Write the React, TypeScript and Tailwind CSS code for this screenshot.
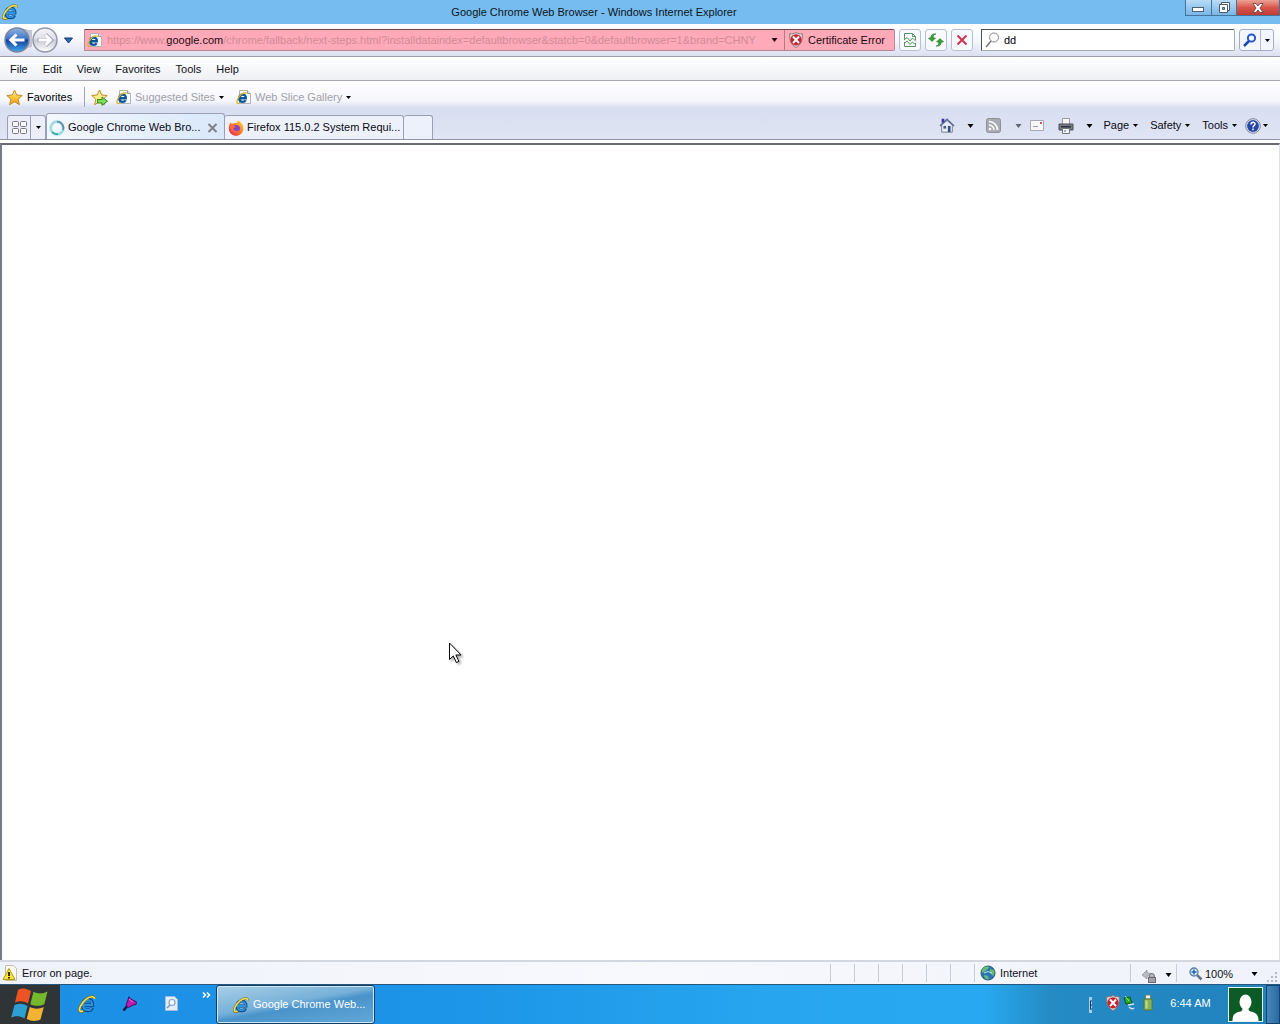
import React from "react";

function Caret({ className = "text-black" }: { className?: string }) {
  return (
    <svg width="7" height="4" viewBox="0 0 7 4" className={"shrink-0 " + className} aria-hidden="true">
      <path d="M0.5 0h6L3.5 4z" fill="currentColor" />
    </svg>
  );
}

function SmallCaret() {
  return (
    <svg width="5" height="3" viewBox="0 0 5 3" className="shrink-0 text-black" aria-hidden="true">
      <path d="M0 0h5L2.5 3z" fill="currentColor" />
    </svg>
  );
}

function IeLogo({ size = 16 }: { size?: number }) {
  return (
    <svg width={size} height={size} viewBox="0 0 16 16" className="shrink-0" aria-hidden="true">
      <path d="M4.500 9h8.300c.1-3-1.500-5-4-5-2.600 0-4.600 2.200-4.600 5 0 2.900 1.800 4.700 4.500 4.700 1.900 0 3.200-.9 3.800-2.500" fill="none" stroke="#0b4584" strokeWidth="3.200" />
      <path d="M4.700 9h7.900c0-2.800-1.500-4.600-3.800-4.600-2.400 0-4.200 2-4.200 4.600 0 2.600 1.700 4.300 4.100 4.300 1.700 0 2.800-.8 3.400-2" fill="none" stroke="#2f93dc" strokeWidth="1.900" />
      <path d="M15 3.600C15 .6 10.500.5 6.500 4.200 2.500 7.800-.2 13 1.700 14.600c.8.700 2 .4 3.200-.2" fill="none" stroke="#7a6a10" strokeWidth="2.200" />
      <path d="M14.900 3.400C14.500.8 10.500.8 6.500 4.300 2.700 7.800.2 12.800 1.800 14.300c.7.600 1.800.3 2.800-.1" fill="none" stroke="#f6de5a" strokeWidth="1.500" />
    </svg>
  );
}

function IePage() {
  return (
    <svg width="16" height="16" viewBox="0 0 16 16" className="shrink-0" aria-hidden="true">
      <path d="M3.500 1.500h8l3 3v10h-11z" fill="#fdfdfd" stroke="#b4b4b8" />
      <path d="M11.500 1.500v3h3" fill="#e4e4e4" stroke="#9a9a9a" />
      <path d="M3 9.300h6.800c.1-2.400-1.100-3.700-3.200-3.700s-3.400 1.400-3.400 3.700 1.400 3.600 3.500 3.600c1.400 0 2.400-.6 2.900-1.700" fill="none" stroke="#0e5799" strokeWidth="2.400" />
      <path d="M10.800 4.600C9.500 3 6 4 3.500 7.200 1.300 10 .3 13.500 1.500 14.300c.6.400 1.300.2 2-.1" fill="none" stroke="#d8b32a" strokeWidth="1.300" />
    </svg>
  );
}

function Star({ arrow = false }: { arrow?: boolean }) {
  return (
    <svg width="17" height="17" viewBox="0 0 17 17" className="shrink-0" aria-hidden="true">
      <defs>
        <linearGradient id="starFill" x1="0" y1="0" x2="0" y2="1">
          <stop offset="0" stopColor="#fff3a0" />
          <stop offset="0.500" stopColor="#fdc83a" />
          <stop offset="1" stopColor="#f39a1c" />
        </linearGradient>
      </defs>
      <path d="M8.500 1l2.200 5 5.500.5-4.100 3.700 1.300 5.500-4.900-2.900-4.900 2.900 1.300-5.500L.8 6.500 6.300 6z" fill={arrow ? "#fdf08a" : "url(#starFill)"} stroke="#c08a2c" strokeWidth="1" strokeLinejoin="round" />
      {arrow && <path d="M6.500 10.500H11V8l5.500 4.200-5.500 4.300V14H6.500z" fill="#7fdc52" stroke="#2f8a24" />}
    </svg>
  );
}

function Shield() {
  return (
    <svg width="16" height="16" viewBox="0 0 16 16" className="shrink-0" aria-hidden="true">
      <path d="M8 .6c2 1 4 1.300 6.300 1.300C14.700 8 13 13 8 15.500 3 13 1.300 8 1.700 1.900 4 1.900 6 1.600 8 .6z" fill="#ddd" stroke="#8d7777" />
      <circle cx="8" cy="7.800" r="5.600" fill="#c9232d" />
      <path d="M5 4.500l6 6.600M11 4.500l-6 6.600" stroke="#fff" strokeWidth="2" />
    </svg>
  );
}

function NavButtons() {
  return (
    <div className="flex shrink-0 -space-x-px">
      <button aria-label="Back" className="block">
        <svg width="28" height="26" viewBox="0 0 28 26" aria-hidden="true">
          <defs>
            <linearGradient id="backFill" x1="0" y1="0" x2="0" y2="1">
              <stop offset="0" stopColor="#90b7e6" />
              <stop offset="0.450" stopColor="#3d74c4" />
              <stop offset="0.500" stopColor="#123f9b" />
              <stop offset="1" stopColor="#3fa8ee" />
            </linearGradient>
          </defs>
          <path d="M13 1c6 0 9 2 15 2V20c-4 0-7 4-15 5z" fill="#c3c6d0" />
          <circle cx="13" cy="13" r="12" fill="url(#backFill)" stroke="#7c86a0" strokeWidth="1.500" />
          <path d="M20.500 13H7.500M12.500 7.500L6.800 13l5.700 5.500" fill="none" stroke="#fff" strokeWidth="3" />
        </svg>
      </button>
      <button aria-label="Forward" className="block">
        <svg width="27" height="26" viewBox="0 0 27 26" aria-hidden="true">
          <defs>
            <linearGradient id="fwdFill" x1="0" y1="0" x2="0" y2="1">
              <stop offset="0" stopColor="#f4f5f9" />
              <stop offset="0.450" stopColor="#dfe1ea" />
              <stop offset="0.500" stopColor="#c6cad6" />
              <stop offset="1" stopColor="#ffffff" />
            </linearGradient>
          </defs>
          <circle cx="14" cy="13" r="12" fill="url(#fwdFill)" stroke="#9297a8" strokeWidth="1.500" />
          <path d="M6.500 13h13M14.500 7.500l5.700 5.500-5.700 5.500" fill="none" stroke="#a3a8b8" strokeWidth="4" />
          <path d="M7.500 13h12M14.500 8l5 5-5 5" fill="none" stroke="#fff" strokeWidth="2.800" />
        </svg>
      </button>
    </div>
  );
}

function TitleBar() {
  return (
    <header className="relative flex h-6 shrink-0 items-start justify-between bg-[#76bcf0]">
      <div className="pt-1 pl-0.5">
        <IeLogo />
      </div>
      <h1 className="absolute inset-x-0 top-0 pr-[92px] text-center text-[11px] leading-6 text-[#0c1420]">
        Google Chrome Web Browser - Windows Internet Explorer
      </h1>
      <div className="relative flex h-4 border border-t-0 border-[#44739b]">
        <button aria-label="Minimize" className="flex w-[26px] items-center justify-center border-r border-[#44739b] bg-gradient-to-b from-[#b9dcf6] to-[#78b6e5] pt-1">
          <svg width="13" height="7" viewBox="0 0 13 7" aria-hidden="true">
            <rect x="0.500" y="1.500" width="11" height="4" fill="#fff" stroke="#4b6175" />
          </svg>
        </button>
        <button aria-label="Restore" className="flex w-[25px] items-center justify-center border-r border-[#44739b] bg-gradient-to-b from-[#b9dcf6] to-[#78b6e5]">
          <svg width="13" height="13" viewBox="0 0 13 13" aria-hidden="true">
            <path d="M3.500 1.500h8v8h-8z" fill="#fff" stroke="#4b5a6b" />
            <path d="M1.500 3.500h8v8h-8z" fill="#fff" stroke="#4b5a6b" />
            <path d="M4.500 6.500h2v2h-2z" fill="#90bde2" stroke="#4b5a6b" />
          </svg>
        </button>
        <button aria-label="Close" className="flex w-[42px] items-center justify-center bg-gradient-to-b from-[#eba196] via-[#d8544c] to-[#c03a34]">
          <svg width="12" height="10" viewBox="0 0 12 10" aria-hidden="true">
            <path d="M1 .5h3l2 2.500L8 .5h3L8 5l3 4.500H8L6 7 4 9.500H1L4 5z" fill="#fff" stroke="#5e3a3a" strokeWidth="0.800" />
          </svg>
        </button>
      </div>
    </header>
  );
}

function ToolButton({ label, children }: { label: string; children: React.ReactNode }) {
  return (
    <button aria-label={label} className="flex h-[22px] w-[22px] shrink-0 items-center justify-center rounded-[3px] border border-[#b4bfd2] bg-[#f8faff]">
      {children}
    </button>
  );
}

function AddressRow() {
  return (
    <div className="flex h-[33px] shrink-0 items-center border-b border-[#9a9bae] bg-gradient-to-b from-white via-[#f7f8fd] to-[#dcdff0] pr-1.5 pl-1">
      <NavButtons />
      <button aria-label="Recent pages" className="flex w-5 shrink-0 justify-center">
        <svg width="9" height="7" viewBox="0 0 9 7" aria-hidden="true">
          <path d="M.5 1h8l-4 5z" fill="#2b6db0" stroke="#173a6b" />
        </svg>
      </button>
      <div className="ml-1.5 flex h-[22px] min-w-0 flex-1 items-center rounded-r-[2px] border border-[#b08896] border-t-[#70434c] bg-[#ffa9b9] pl-0.5">
        <IePage />
        <div className="ml-1 min-w-0 flex-1 overflow-hidden whitespace-nowrap text-[11px] text-[#cf8c98]">
          https://www.<span className="text-[#1c0a10]">google.com</span>/chrome/fallback/next-steps.html?installdataindex=defaultbrowser&amp;statcb=0&amp;defaultbrowser=1&amp;brand=CHNY
        </div>
        <button aria-label="Show address list" className="flex w-[22px] shrink-0 justify-center self-stretch border-r border-[#bd7483] pl-0.5 pt-2">
          <Caret className="text-[#22060c]" />
        </button>
        <button className="flex w-[109px] shrink-0 items-center gap-1 pl-[3px] text-[11px] whitespace-nowrap text-[#1c0a10]">
          <Shield />
          Certificate Error
        </button>
      </div>
      <div className="ml-1 flex shrink-0 gap-1">
        <ToolButton label="Compatibility view">
          <svg width="14" height="16" viewBox="0 0 14 16" aria-hidden="true">
            <path d="M1.500 7V1.500h8l3 3V8M9.500 1.500v3h3M1.500 10v4.500h11V11" fill="none" stroke="#5d8f63" />
            <path d="M1 8l3-2.500L7 9l2.500-3L13 9.500M1 11.500L4 9l3 3.500L9.500 10l3.500 3" fill="none" stroke="#4d9a58" />
          </svg>
        </ToolButton>
        <ToolButton label="Refresh">
          <svg width="16" height="14" viewBox="0 0 16 14" aria-hidden="true">
            <path d="M8 1C5.500 1 5.200 2.500 5.200 5H7.500L4 8.500.5 5h2.300c0-3 1.500-4.500 5.200-4z" fill="#37a52f" stroke="#1d6d1c" strokeWidth="0.600" />
            <path d="M8 13c2.500 0 2.800-1.500 2.800-4H8.500L12 5.500 15.500 9h-2.300c0 3-1.500 4.500-5.200 4z" fill="#37a52f" stroke="#1d6d1c" strokeWidth="0.600" />
          </svg>
        </ToolButton>
        <ToolButton label="Stop">
          <svg width="12" height="12" viewBox="0 0 12 12" aria-hidden="true">
            <path d="M1.500 1.500l9 9M10.500 1.500l-9 9" stroke="#d0334c" strokeWidth="2" />
          </svg>
        </ToolButton>
      </div>
      <label className="ml-2 flex h-[22px] w-[20%] shrink-0 items-center rounded-r-[2px] border border-[#a3acb8] border-t-[#4b544c] border-l-[#4b544c] bg-white pl-[3px]">
        <svg width="16" height="16" viewBox="0 0 16 16" className="shrink-0" aria-hidden="true">
          <circle cx="9" cy="5.500" r="4.500" fill="#fbfbfb" stroke="#8a8a8a" />
          <path d="M6 9l-5 6" stroke="#777" strokeWidth="1.500" />
        </svg>
        <input aria-label="Search" defaultValue="dd" className="ml-[3px] min-w-0 flex-1 bg-transparent text-[11px] text-black outline-none" />
      </label>
      <div className="ml-1 flex h-[22px] shrink-0 rounded-[3px] border border-[#a4adc6] bg-[#f3f6ff]">
        <button aria-label="Go" className="flex w-[21px] items-center justify-center border-r border-[#b4bccd]">
          <svg width="14" height="14" viewBox="0 0 14 14" aria-hidden="true">
            <circle cx="8.500" cy="5" r="3.600" fill="#fff" stroke="#2459cf" strokeWidth="2" />
            <path d="M6 8l-5 5" stroke="#1a45a9" strokeWidth="2.500" />
          </svg>
        </button>
        <button aria-label="Search options" className="flex w-3 items-center justify-center">
          <SmallCaret />
        </button>
      </div>
    </div>
  );
}

function MenuRow() {
  return (
    <nav className="flex h-6 shrink-0 items-center gap-[15px] border-b border-[#a5a6b0] bg-gradient-to-b from-white to-[#eef0f5] pt-px pl-2.5 text-[11px] text-[#101018]">
      {["File", "Edit", "View", "Favorites", "Tools", "Help"].map((m) => (
        <button key={m}>{m}</button>
      ))}
    </nav>
  );
}

function FavoritesRow() {
  return (
    <div className="flex h-[34px] shrink-0 items-center pb-0.5 pl-1.5 text-[11px] whitespace-nowrap">
      <button className="flex w-[78px] items-center gap-1 text-black">
        <Star />
        Favorites
      </button>
      <div className="mr-1.5 h-5 border-l border-[#a2a4b4]" />
      <button aria-label="Add to Favorites Bar">
        <Star arrow />
      </button>
      <button className="ml-2 flex w-[120px] items-center text-[#a0a0a8]">
        <IePage />
        <span className="mr-1 ml-[3px]">Suggested Sites</span>
        <SmallCaret />
      </button>
      <button className="flex items-center text-[#a0a0a8]">
        <IePage />
        <span className="mr-1 ml-[3px]">Web Slice Gallery</span>
        <SmallCaret />
      </button>
    </div>
  );
}

function Tabs() {
  return (
    <div className="flex h-6 items-stretch pl-[7px] text-[11px] text-[#0a0a14]">
      <div className="flex rounded-t-[3px] border border-b-0 border-[#9a9fb5] bg-[#eceffa]">
        <button aria-label="Quick tabs" className="flex w-[23px] items-center justify-center border-r border-[#9a9fb5]">
          <svg width="15" height="13" viewBox="0 0 15 13" fill="#f8f8fc" stroke="#77777f" aria-hidden="true">
            <rect x="0.500" y="0.500" width="6" height="5" rx="1" />
            <rect x="8.500" y="0.500" width="6" height="5" rx="1" />
            <rect x="0.500" y="7.500" width="6" height="5" rx="1" />
            <rect x="8.500" y="7.500" width="6" height="5" rx="1" />
          </svg>
        </button>
        <button aria-label="Tab list" className="flex w-3.5 items-center justify-center">
          <SmallCaret />
        </button>
      </div>
      <div className="-mt-0.5 flex w-[179px] items-center rounded-t-[3px] border border-b-0 border-[#9a9fb5] bg-gradient-to-r from-[#f4f8ff] to-[#d9e8fb] pt-0.5 pr-1.5 pl-0.5">
        <svg width="16" height="16" viewBox="0 0 16 16" className="shrink-0" fill="none" aria-hidden="true">
          <circle cx="8" cy="8" r="6.300" stroke="#a3dbe4" strokeWidth="2.800" />
          <path d="M8 1.700A6.300 6.300 0 0 1 14 10" stroke="#5c8fa9" strokeWidth="1.800" />
          <path d="M3 12a6.300 6.300 0 0 0 6 2" stroke="#2fa9a0" strokeWidth="1.800" />
        </svg>
        <button className="ml-[3px] flex-1 text-left whitespace-nowrap">Google Chrome Web Bro...</button>
        <button aria-label="Close tab">
          <svg width="11" height="10" viewBox="0 0 11 10" aria-hidden="true">
            <path d="M1.500 1l8 8M9.500 1l-8 8" stroke="#808088" strokeWidth="2" />
          </svg>
        </button>
      </div>
      <button className="flex w-[179px] items-center rounded-t-[3px] border border-b-0 border-l-0 border-[#9a9fb5] bg-[#edf1fc] pl-[3px] whitespace-nowrap">
        <svg width="16" height="16" viewBox="0 0 16 16" className="mr-[3px] shrink-0" aria-hidden="true">
          <defs>
            <linearGradient id="fox" x1="1" y1="0" x2="0" y2="1">
              <stop offset="0" stopColor="#ffe23f" />
              <stop offset="0.400" stopColor="#ff8b23" />
              <stop offset="1" stopColor="#e3175c" />
            </linearGradient>
          </defs>
          <path d="M10 .5c3 1.500 5.500 4.500 5.500 8A7.400 7.400 0 0 1 .7 8.500c0-2.500.8-4.500 1.800-6L4 4c1-1 2.500-1 4-1 1-.5 2-1.200 2-2.500z" fill="url(#fox)" />
          <circle cx="8.300" cy="8.500" r="3.600" fill="#8544c9" />
          <path d="M2 6.500c2-1 4-.6 6 .5-1.500.2-2 1.500-3.200 1.500 1 2.500 4 3.500 6.500 1.500-1 3-7.500 4-9.300-3.500z" fill="#ff7139" />
        </svg>
        Firefox 115.0.2 System Requi...
      </button>
      <button aria-label="New tab" className="w-[29px] rounded-t-[3px] border border-b-0 border-l-0 border-[#9a9fb5] bg-[#edf1fc]" />
    </div>
  );
}

function TextCommand({ label }: { label: string }) {
  return (
    <button className="flex items-center gap-1">
      {label}
      <SmallCaret />
    </button>
  );
}

function CommandBar() {
  return (
    <div className="flex items-center pr-3 pb-[3px] text-[11px] whitespace-nowrap text-[#0a0a14]">
      <button aria-label="Home">
        <svg width="16" height="17" viewBox="0 0 18 17" aria-hidden="true">
          <path d="M3 8v8h12V8L9 3z" fill="#e8edf6" stroke="#6d7890" />
          <path d="M1 9l8-7.500L17 9" fill="none" stroke="#5b6c93" strokeWidth="1.500" />
          <path d="M3 1h3v3L3 6z" fill="#3f32a5" />
          <path d="M10 9h3v7h-3z" fill="#39507a" />
          <path d="M5 9h3v3H5z" fill="#4a5a78" />
        </svg>
      </button>
      <button aria-label="Home options" className="ml-3"><Caret /></button>
      <button aria-label="Feeds" className="ml-3">
        <svg width="15" height="15" viewBox="0 0 15 15" fill="none" aria-hidden="true">
          <rect x="0.500" y="0.500" width="14" height="14" rx="2" fill="#a9acb4" stroke="#8e9199" />
          <path d="M3 7a5 5 0 0 1 5 5M3 3.500A8.500 8.500 0 0 1 11.500 12" stroke="#fff" strokeWidth="1.600" />
          <circle cx="4" cy="11" r="1.300" fill="#fff" />
        </svg>
      </button>
      <button aria-label="Feed options" className="ml-3.5"><Caret className="text-[#62646e]" /></button>
      <button aria-label="Read mail" className="ml-2">
        <svg width="15" height="12" viewBox="0 0 15 12" aria-hidden="true">
          <path d="M.5.5h13v10H.5z" fill="#f7f7fa" stroke="#a7a9b3" />
          <path d="M3 6.500h5" stroke="#9a9ca5" />
          <path d="M10 2h2v2h-2z" fill="#c55a66" />
        </svg>
      </button>
      <button aria-label="Print" className="ml-[13px]">
        <svg width="16" height="16" viewBox="0 0 16 16" aria-hidden="true">
          <path d="M4.500.5h7v6h-7z" fill="#f7f7f7" stroke="#9a9a9a" />
          <path d="M1 6h14v6H1z" fill="#777c84" stroke="#4b4f58" />
          <path d="M3 8h10v1.500H3z" fill="#2f3238" />
          <path d="M4.500 10.500h7v5h-7z" fill="#f2f2f2" stroke="#777" />
          <path d="M6 13h2" stroke="#3d6fb4" />
        </svg>
      </button>
      <button aria-label="Print options" className="ml-3"><Caret /></button>
      <div className="ml-2.5 flex items-center gap-3">
        <TextCommand label="Page" />
        <TextCommand label="Safety" />
        <TextCommand label="Tools" />
      </div>
      <button aria-label="Help" className="ml-2 flex items-center gap-0.5">
        <svg width="16" height="16" viewBox="0 0 16 16" aria-hidden="true">
          <circle cx="8" cy="8" r="7.300" fill="#dfe3ee" stroke="#7d869c" />
          <circle cx="8" cy="8" r="5.900" fill="#2747a8" />
          <path d="M6 6.500c0-3 4-2.700 4-.5C10 7.500 8 7.500 8 9.500M8 10.500v1.800" fill="none" stroke="#fff" strokeWidth="1.500" />
        </svg>
        <SmallCaret />
      </button>
    </div>
  );
}

function StatusBar() {
  return (
    <div className="flex h-6 shrink-0 items-center border-t-2 border-[#d3d7df] bg-gradient-to-r from-[#f0f2fb] via-[#f7f9fd] to-[#eff2fa] pl-0.5 text-[11px] text-[#101018]">
      <svg width="16" height="16" viewBox="0 0 16 16" className="shrink-0" aria-hidden="true">
        <path d="M3.500.5h8l3 3v12h-11z" fill="#fbfaf0" stroke="#c4c0ac" />
        <path d="M7 3.500L1 14.500h12z" fill="#fbe233" stroke="#b59a14" strokeLinejoin="round" />
        <path d="M7 7v4M7 12v1.500" stroke="#1b1b1b" strokeWidth="1.800" />
      </svg>
      <span className="ml-1 flex-1 whitespace-nowrap">Error on page.</span>
      <div className="flex h-[18px] shrink-0">
        {[0, 1, 2, 3, 4, 5].map((i) => (
          <div key={i} className="w-6 border-l border-[#c9ccd6]" />
        ))}
      </div>
      <div className="flex h-[18px] w-[156px] shrink-0 items-center gap-1 border-l border-[#c9ccd6] pl-[5px]">
        <svg width="16" height="16" viewBox="0 0 16 16" aria-hidden="true">
          <circle cx="8" cy="8" r="7" fill="#2a75b8" stroke="#245679" />
          <path d="M2 5c2-4 5-3.500 7-3.500C9 4 7 4 6 6L2 8zM10 4l4 1c1 3 0 5-1 6l-3-3zM4 10l4 1 1 3.500c-3 0-5-1.500-5-4.500z" fill="#6cba70" />
          <path d="M4 8q4-3 8 0" fill="none" stroke="#bfe5f2" />
        </svg>
        Internet
      </div>
      <button aria-label="Security options" className="flex h-[18px] w-[47px] shrink-0 items-center justify-between border-x border-[#c9ccd6] pt-1 pr-1 pl-2.5">
        <svg width="16" height="15" viewBox="0 0 16 15" aria-hidden="true">
          <path d="M1 7l5-5v3c5 0 7 1 7 4H9C9 8 8 8 6 8v3z" fill="#b9bcc3" stroke="#94979f" strokeWidth="0.800" />
          <path d="M8.500 9.500V8a2.500 2.500 0 0 1 5 0v1.500" fill="none" stroke="#777" />
          <rect x="7.500" y="9.500" width="7" height="5" fill="#a0a0a6" stroke="#6c6c74" />
        </svg>
        <Caret />
      </button>
      <button className="flex h-[18px] shrink-0 items-center pt-0.5 pl-3">
        <svg width="14" height="14" viewBox="0 0 14 14" aria-hidden="true">
          <circle cx="5" cy="5" r="4" fill="#d8eaf8" stroke="#5d7f9f" strokeWidth="1.300" />
          <path d="M8 8l4.500 4.500" stroke="#6b7486" strokeWidth="2.500" />
          <path d="M5 2.500v5M2.500 5h5" stroke="#1f66b4" strokeWidth="1.500" />
        </svg>
        <span className="ml-0.5 w-[46px] text-left">100%</span>
        <Caret />
      </button>
      <svg width="13" height="13" viewBox="0 0 13 13" className="ml-2 mr-px shrink-0 self-end" fill="#b4b8c2" aria-hidden="true">
        <path d="M9 1h2v2H9zM5 5h2v2H5zM9 5h2v2H9zM1 9h2v2H1zM5 9h2v2H5zM9 9h2v2H9z" />
      </svg>
    </div>
  );
}

function TaskBar() {
  return (
    <footer className="flex h-10 shrink-0 items-stretch border-t border-[#28577d] bg-[linear-gradient(90deg,#1c8fe3_0%,#1c94e8_35%,#27a6ef_60%,#27a8f0_77%,#258bc4_82%,#2182bd_100%)] text-[11px] text-white">
      <button aria-label="Start" className="flex w-[60px] shrink-0 items-center justify-center bg-[#2f3436]">
        <svg width="42" height="34" viewBox="0 0 42 34" aria-hidden="true">
          <path d="M9 2c5-2.500 8-1.500 13 1l-3 12.500c-4.500-2.500-8-3-13-1z" fill="#ec5523" />
          <path d="M24.500 3.800c5 2.200 9 2.200 14-.3l-3.200 12.700c-5 2-9 2-14 0z" fill="#75b82b" />
          <path d="M5.500 17c5-2 8.500-1.500 13 1l-3 12.500c-4.500-2.500-8-3-13.300-1z" fill="#2d9fd0" />
          <path d="M20.800 19c5 2.200 9 2.200 14 0l-3.300 12.500c-5 2.200-9 1.800-13.800-.5z" fill="#f4b232" />
        </svg>
      </button>
      <div className="flex items-center pl-[18px] pb-0.5">
        <button aria-label="Internet Explorer"><IeLogo size={18} /></button>
        <button aria-label="Paint tool" className="ml-[26px]">
          <svg width="16" height="16" viewBox="0 0 16 16" aria-hidden="true">
            <path d="M1.500 14.500l5-6" stroke="#1b1446" strokeWidth="2.500" />
            <path d="M7 .8l1.500 2L14.500 6l-.5 2.500-3 .5-4.500 2.500L4 9.500z" fill="#bd1cb3" stroke="#4b0b62" />
            <path d="M7 3l4 3" stroke="#ed6be2" />
          </svg>
        </button>
        <button aria-label="Search document" className="ml-[26px]">
          <svg width="15" height="17" viewBox="0 0 15 17" aria-hidden="true">
            <path d="M1.500 1.500h9l3 3v11h-12z" fill="#e2edf8" stroke="#a3bddb" />
            <circle cx="8" cy="7.500" r="3" fill="#f9fcff" stroke="#87a3c4" strokeWidth="1.200" />
            <path d="M6 10l-3 3" stroke="#7893b4" strokeWidth="1.500" />
          </svg>
        </button>
      </div>
      <button aria-label="More shortcuts" className="ml-[22px] h-5 pl-px">
        <svg width="9" height="6" viewBox="0 0 9 6" fill="none" stroke="#fff" strokeWidth="1.500" aria-hidden="true">
          <path d="M1 .5L3.500 3 1 5.500M5 .5L7.500 3 5 5.500" />
        </svg>
      </button>
      <button className="ml-[5px] flex w-[159px] shrink-0 items-center gap-1 rounded-[3px] border border-[#123f63] bg-[linear-gradient(170deg,#a9cfe7_0%,#76b0d8_45%,#4993ca_55%,#63a9d8_100%)] pl-4 whitespace-nowrap inset-ring inset-ring-[#cfe8f8]">
        <IeLogo />
        Google Chrome Web...
      </button>
      <div className="ml-auto flex shrink-0 items-center">
        <svg width="4" height="16" viewBox="0 0 4 16" aria-hidden="true">
          <path d="M0 0h3v16H0z" fill="#a9cde4" />
          <path d="M1 4h2M1 8h2M1 12h2M1.500 4v8" stroke="#173a60" />
        </svg>
        <div className="ml-3 flex items-center pb-1">
          <Shield />
          <svg width="15" height="16" viewBox="0 0 15 16" className="ml-px" aria-hidden="true">
            <path d="M2 3l6-1 2 6-6 1z" fill="#2aa62d" stroke="#0c5714" />
            <path d="M6 10l6-1M7 12q3 3 5 1" fill="none" stroke="#d7e2e8" strokeWidth="1.500" />
            <path d="M3 1l4 5" stroke="#8df089" />
          </svg>
          <svg width="10" height="17" viewBox="0 0 10 17" className="ml-1.5" aria-hidden="true">
            <path d="M2.500 1h5v4h-5z" fill="#eef3ea" stroke="#73806e" />
            <path d="M1 5h8v11H1z" fill="#86b457" stroke="#56773a" />
            <path d="M2.500 6.500h2v8h-2z" fill="#bcdc94" />
          </svg>
        </div>
        <time className="w-[75px] pb-0.5 text-center">6:44 AM</time>
        <button aria-label="User account" className="flex h-[35px] w-[35px] items-end justify-center border border-[#e5f2e9] bg-[#0c5b27]">
          <svg width="29" height="30" viewBox="0 0 29 30" fill="#fff" aria-hidden="true">
            <ellipse cx="14.500" cy="11" rx="6" ry="7.500" />
            <path d="M1.500 30c0-7 3-8.500 8-9.500 2-.5 2-2 2-4h6c0 2 0 3.500 2 4 5 1 8 2.500 8 9.500z" />
          </svg>
        </button>
      </div>
      <button aria-label="Show desktop" className="ml-[3px] w-[14px] shrink-0 border border-[#12446f] bg-gradient-to-r from-[#4788b9] to-[#2a6aa2]" />
    </footer>
  );
}

export default function App() {
  return (
    <div className="flex h-screen flex-col overflow-hidden bg-white font-['Liberation_Sans',Arial,sans-serif]">
      <TitleBar />
      <AddressRow />
      <MenuRow />
      <div className="shrink-0 border-b border-[#8f93a3] bg-[linear-gradient(180deg,#ffffff_0%,#f5f6fc_35%,#d8dff0_46%,#e0e4f5_100%)]">
        <FavoritesRow />
        <div className="flex justify-between">
          <Tabs />
          <CommandBar />
        </div>
      </div>
      <main className="relative mt-[3px] flex-1 border-t-2 border-r border-l-2 border-t-[#686d74] border-r-[#dfe1e8] border-l-[#777c84] bg-white">
        <svg width="16" height="24" viewBox="0 0 16 24" className="absolute top-[497px] left-[446px] drop-shadow-[2px_2px_1px_rgba(0,0,0,0.300)]" aria-hidden="true">
          <path d="M1.500 1v16.500l3.800-3.600 3 6.600 2.600-1.200-3-6.300h5.200z" fill="#fff" stroke="#000" />
        </svg>
      </main>
      <StatusBar />
      <TaskBar />
    </div>
  );
}
